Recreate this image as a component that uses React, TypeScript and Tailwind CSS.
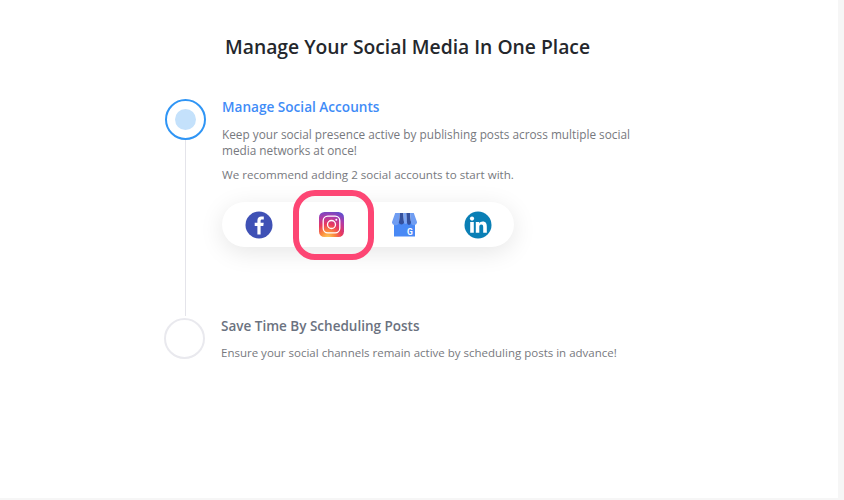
import type { ReactNode } from 'react';

function FacebookIcon() {
  return (
    <svg width="28" height="28" viewBox="0 0 28 28">
      <circle cx="14" cy="14" r="13.5" fill="#3f51b5" />
      <path
        d="M15.6 23.500v-8.500h2.700l.4-3.200h-3.100V9.900c0-.9.3-1.500 1.600-1.500h1.600V5.600c-.3 0-1.300-.1-2.400-.1-2.400 0-4 1.400-4 4.100v2.200H9.700V15h2.700v8.500z"
        fill="#ffffff"
      />
    </svg>
  );
}

function InstagramIcon() {
  return (
    <svg width="25" height="25" viewBox="0 0 25 25">
      <defs>
        <radialGradient id="igGlow" cx="0.35" cy="1.05" r="1.15">
          <stop offset="0" stopColor="#fdd55f" />
          <stop offset="0.25" stopColor="#fb8a3c" />
          <stop offset="0.5" stopColor="#e8385f" />
          <stop offset="0.75" stopColor="#b03aa8" />
          <stop offset="1" stopColor="#5b4fd0" />
        </radialGradient>
      </defs>
      <rect width="25" height="25" rx="5.5" fill="url(#igGlow)" />
      <rect x="4.200" y="4.200" width="16.600" height="16.600" rx="4.600" fill="none" stroke="#fff" strokeWidth="1.300" />
      <circle cx="12.500" cy="12.500" r="4" fill="none" stroke="#fff" strokeWidth="1.300" />
      <circle cx="17.300" cy="7.700" r="1" fill="#fff" />
    </svg>
  );
}

function BusinessIcon() {
  return (
    <svg width="25" height="24" viewBox="0 0 25 24">
      <path d="M2 8h21v15.500H2z" fill="#4989f5" />
      <path d="M3.200 0H8L6.900 9.500a3.400 2.900 0 0 1-6.900-.5z" fill="#6f9df2" />
      <path d="M8 0h3.400L12 9.500a2.600 2.400 0 0 1-5.100 0z" fill="#34509c" />
      <path d="M11.400 0h2.900l.8 9.500a1.600 2 0 0 1-3.100 0z" fill="#7ba6f5" />
      <path d="M14.300 0H18l1 9.500a2 2.400 0 0 1-4 0z" fill="#34509c" />
      <path d="M18 0h3.800L25 9a3 2.900 0 0 1-6 .5z" fill="#6f9df2" />
      <text x="18" y="21.500" fontSize="8.500" fontWeight="700" fill="#fff" textAnchor="middle" fontFamily="Roboto, sans-serif">
        G
      </text>
    </svg>
  );
}

function LinkedInIcon() {
  return (
    <svg width="28" height="28" viewBox="0 0 28 28">
      <circle cx="14" cy="14" r="13.500" fill="#0a7fb5" />
      <circle cx="8" cy="7.600" r="2.100" fill="#fff" />
      <path
        d="M6.200 10.900h3.600v10.800H6.200zM11.800 10.900h3.400v1.500c.7-1 1.900-1.800 3.500-1.800 3.300 0 4.100 2.200 4.100 5v6.100h-3.600v-5.400c0-1.300-.3-2.700-1.900-2.700s-2 1.300-2 2.700v5.400h-3.500z"
        fill="#fff"
      />
    </svg>
  );
}

function Step({ active, title, children }: { active?: boolean; title: string; children: ReactNode }) {
  return (
    <div className="flex">
      <div className="flex flex-col items-center w-[41px] shrink-0">
        {active ? (
          <div className="w-[41px] h-[41px] rounded-full border-2 border-[#2f95f5] bg-white flex items-center justify-center">
            <div className="w-[21px] h-[21px] rounded-full bg-[#c4e1fb]" />
          </div>
        ) : (
          <div className="w-[41px] h-[41px] rounded-full border-2 border-[#e9e9ee] bg-white" />
        )}
      </div>
      <div className="ml-[16px] -mt-[1px]">
        <h2
          className={
            active
              ? 'text-[13.6px] leading-[18px] font-semibold text-[#3f8cf7]'
              : 'text-[13.5px] leading-[18px] font-semibold text-[#6b7280]'
          }
        >
          {title}
        </h2>
        {children}
      </div>
    </div>
  );
}

export default function App() {
  return (
    <div className="w-[844px] h-[500px] bg-[#f6f6f6] overflow-hidden font-['Open_Sans',sans-serif]">
      <main className="relative w-[838px] h-[498px] bg-white pt-[35px]">
        <h1 className="w-[815px] text-center text-[19.3px] leading-[24px] font-semibold text-[#24272c]">
          Manage Your Social Media In One Place
        </h1>

        <section className="relative ml-[165px] mt-[40px] w-[480px]">
          <div className="absolute left-[20px] top-[41px] w-[1px] h-[176px] bg-[#e4e4ea]" />

          <div className="h-[219px]">
            <Step active title="Manage Social Accounts">
              <p className="mt-[10px] text-[11.8px] leading-[16px] text-[#77797e] w-[420px]">
                Keep your social presence active by publishing posts across multiple social
                <br />
                media networks at once!
              </p>
              <p className="mt-[9px] text-[11.6px] leading-[16px] text-[#77797e]">
                We recommend adding 2 social accounts to start with.
              </p>
              <div className="relative mt-[19px] w-[292px] h-[45px] rounded-full bg-white shadow-[0_5px_24px_rgba(0,0,0,0.1)] grid grid-cols-4 items-center justify-items-center">
                <FacebookIcon />
                <InstagramIcon />
                <BusinessIcon />
                <LinkedInIcon />
                <div className="absolute left-[71px] top-[-12px] w-[81px] h-[70px] rounded-[22px] border-[6px] border-[#fd4674]" />
              </div>
            </Step>
          </div>

          <div className="-ml-[1px]">
            <Step title="Save Time By Scheduling Posts">
              <p className="mt-[10px] text-[11.5px] leading-[16px] text-[#77797e]">
                Ensure your social channels remain active by scheduling posts in advance!
              </p>
            </Step>
          </div>
        </section>
      </main>
    </div>
  );
}
